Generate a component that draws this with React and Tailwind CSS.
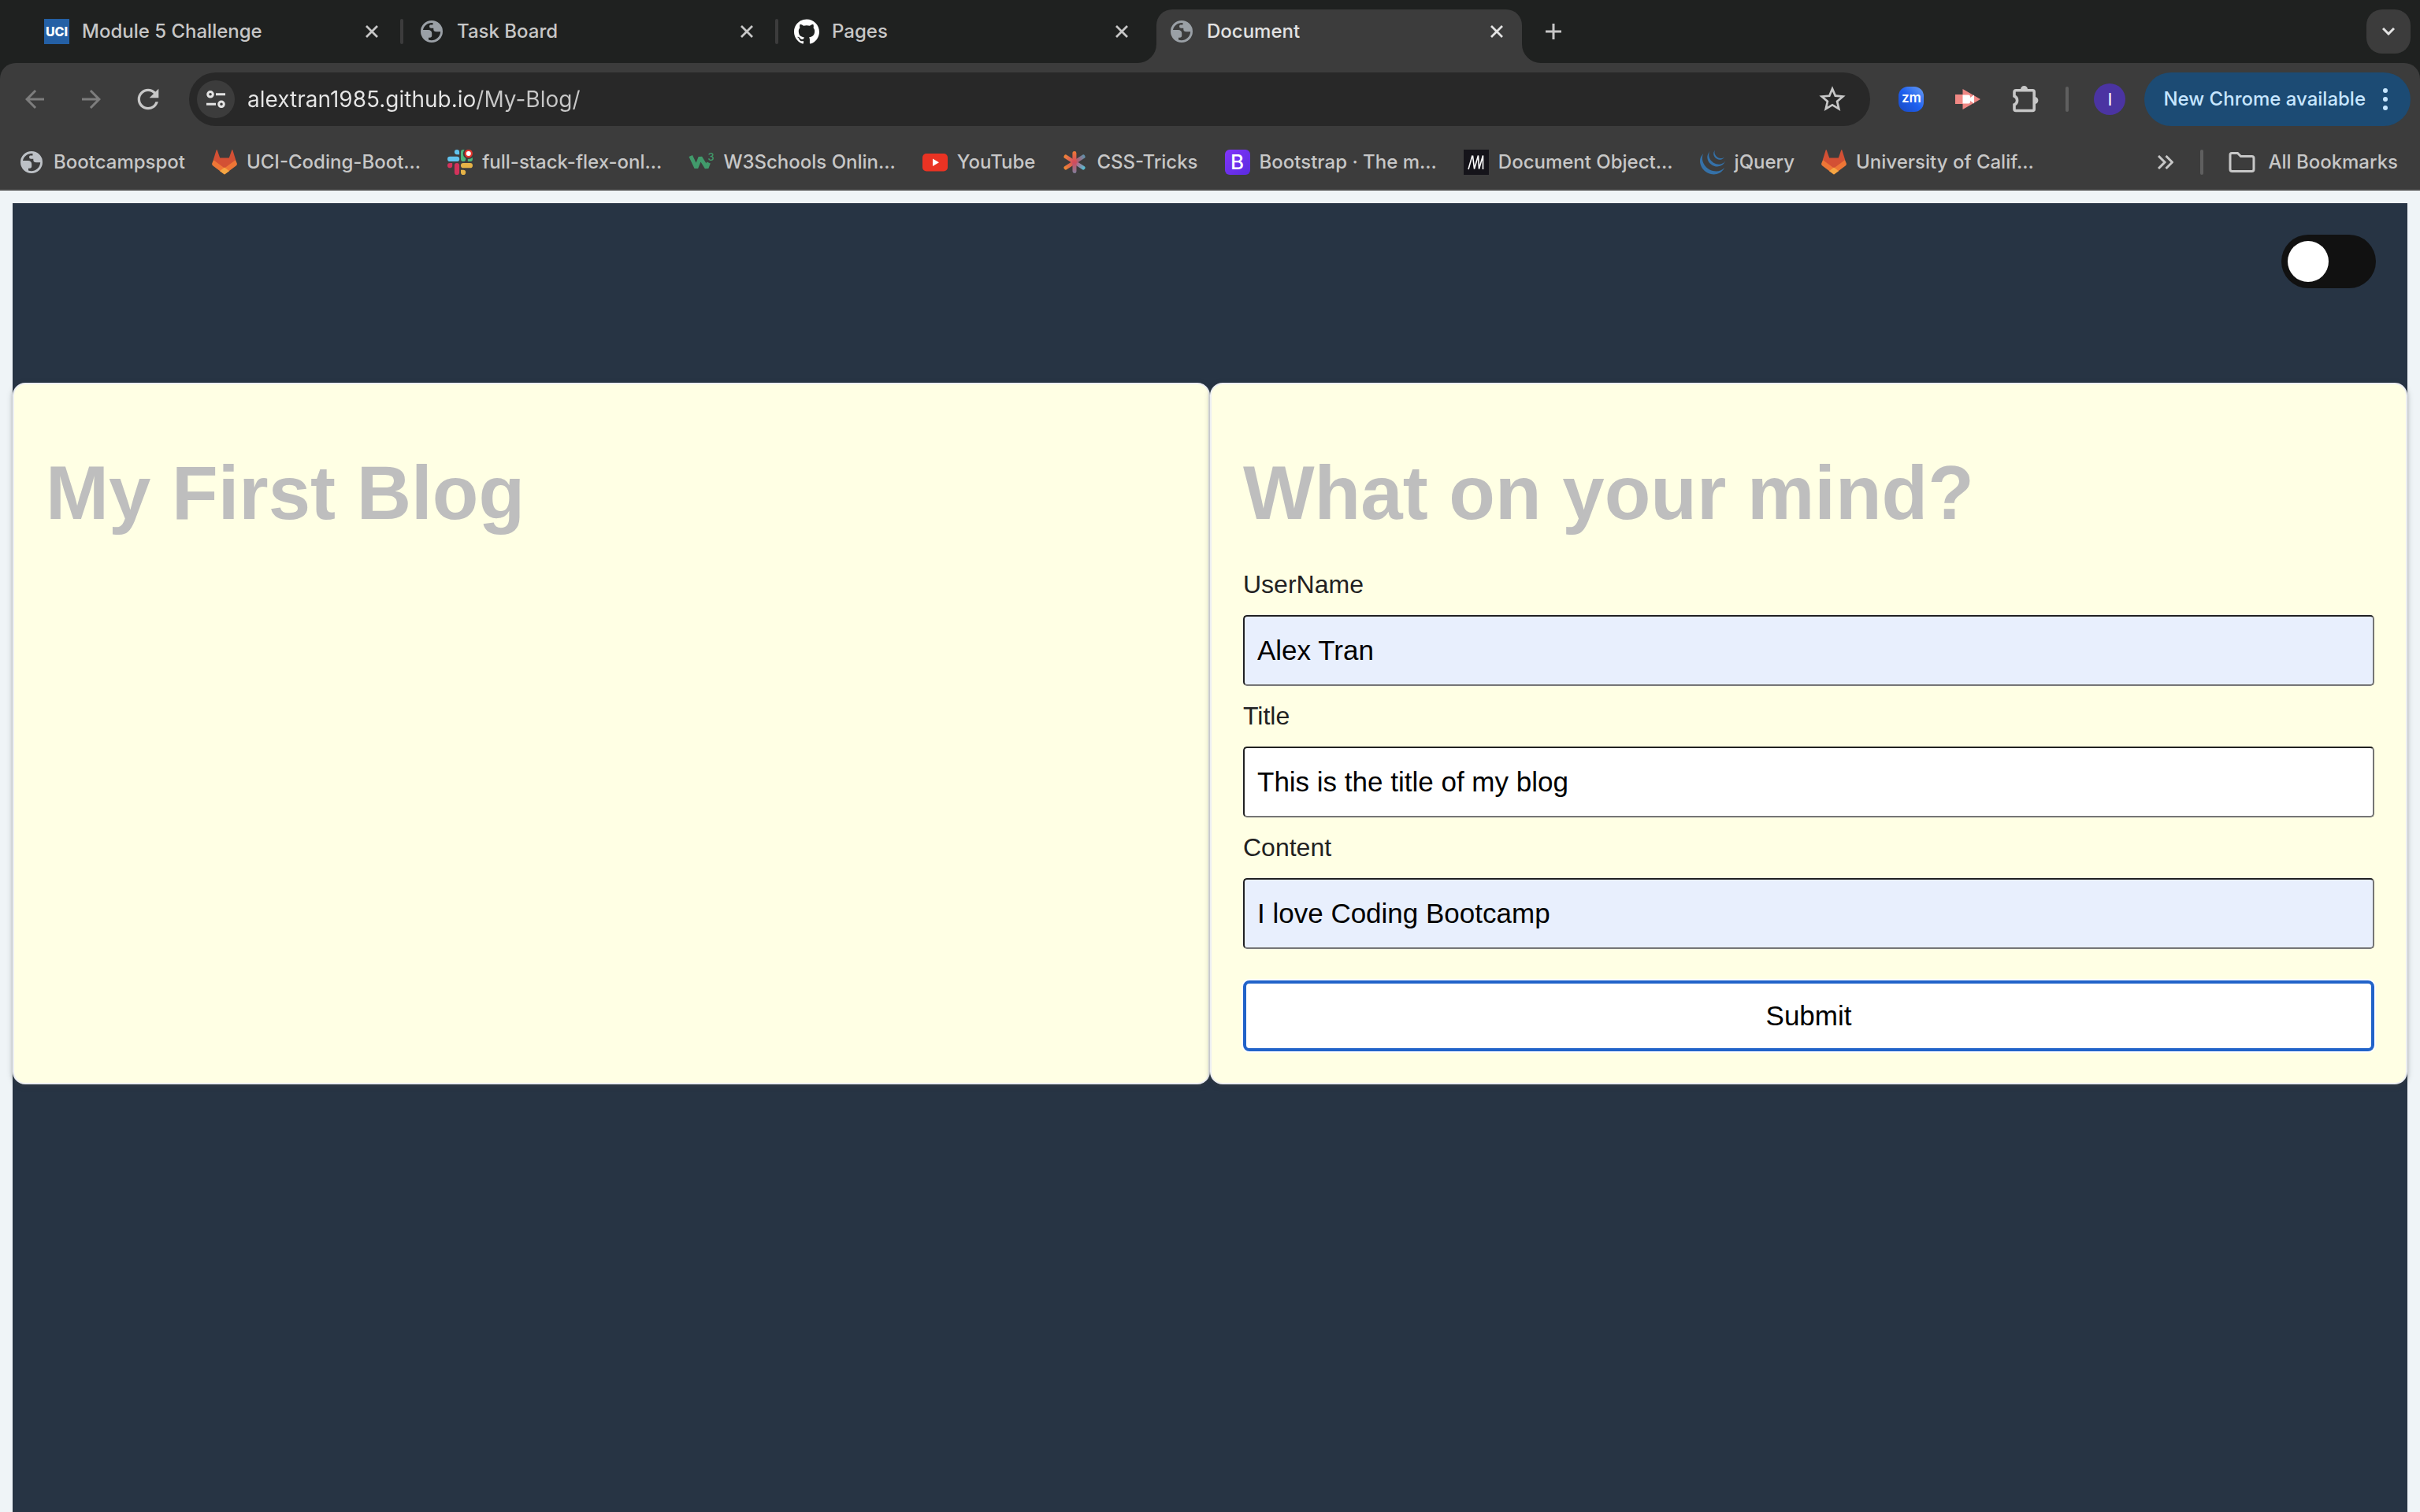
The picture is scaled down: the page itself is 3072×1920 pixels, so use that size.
import { useState } from "react";
import { MdArrowBack, MdArrowForward, MdRefresh, MdStarBorder } from "react-icons/md";
import { SiJquery, SiGithub } from "react-icons/si";

function Globe({ className }) {
  return (
    <svg viewBox="-2 -2 32 32" className={`size-8 shrink-0 ${className}`} fill="currentColor" aria-hidden="true">
      <path
        fillRule="evenodd"
        d="M14 0a14 14 0 1 0 0 28a14 14 0 1 0 0-28zM15.5 3C9 2.4 4 6.6 3 12h6.500c3 0 4.700 1.700 4.700 4.300v3c0 1.500-1 2.400-2.400 2.400H10v2.800c6.500 2.300 14.500-1.500 15.200-10.200h-5.400c-2.300 0-3.500-1.200-3.500-3V9.700h-3c-1.400 0-2.200-.7-2.200-2V7c0-1 .7-1.600 1.700-1.600h2.700z"
      />
    </svg>
  );
}

function UciIcon() {
  return (
    <span className="flex size-8 shrink-0 items-center justify-center bg-[#2460a5] text-[16px] leading-none font-extrabold text-white">
      UCI
    </span>
  );
}

function Tanuki() {
  return (
    <svg viewBox="0 0 32 32" className="size-8 shrink-0" aria-hidden="true">
      <path fill="#ee7636" d="M2 13L.2 17.600c-.3 1 0 2 .8 2.600L16 31.500L31 20.200c.8-.6 1.100-1.600.8-2.600L30 13z" />
      <path fill="#d35034" d="M5.600.8c.2-.6 1-.6 1.200 0L10.200 10.500h11.600L25.200.8c.2-.6 1-.6 1.200 0L30.200 13L16 23.500L1.800 13z" />
      <path fill="#f5a643" d="M16 22.500L22 27.200L16 31.500L10 27.200z" />
    </svg>
  );
}

function SlackIcon() {
  return (
    <svg viewBox="0 0 32 32" className="size-8 shrink-0" aria-hidden="true">
      <g fill="#61c3ee">
        <path d="M12 0a3.100 3.100 0 1 0 0 6.200h3.100V3.100A3.100 3.100 0 0 0 12 0z" />
        <rect y="8.800" width="15.200" height="6.200" rx="3.100" />
      </g>
      <g fill="#4db57c">
        <rect x="17" width="6.200" height="15" rx="3.100" />
        <path d="M25.800 15v-3.100a3.100 3.100 0 1 1 3.100 3.100z" />
      </g>
      <g fill="#d2335b">
        <path d="M0 20.200a3.100 3.100 0 1 0 6.200 0v-3.100H3.100A3.100 3.100 0 0 0 0 20.200z" />
        <rect x="8.900" y="17.100" width="6.200" height="14.900" rx="3.100" />
      </g>
      <g fill="#e6b347">
        <rect x="17" y="17.100" width="15" height="6.200" rx="3.100" />
        <path d="M17 25.800v3.100a3.100 3.100 0 1 0 3.100-3.100z" />
      </g>
      <circle cx="26.800" cy="5" r="7" fill="#3c3c3c" />
      <circle cx="26.800" cy="5" r="5.200" fill="#e3352b" />
      <circle cx="26.800" cy="5" r="3" fill="#fff" />
    </svg>
  );
}

function W3Icon() {
  return (
    <svg viewBox="0 0 32 32" className="size-8 shrink-0" aria-hidden="true">
      <path
        d="M2.800 8L9.800 23L15 10L23 23L25.500 16.500"
        fill="none"
        stroke="#419a6b"
        strokeWidth="5"
        strokeLinejoin="bevel"
      />
      <text x="24.500" y="14" fontSize="13" fontWeight="500" fill="#419a6b" fontFamily="Inter, sans-serif">3</text>
    </svg>
  );
}

function YouTubeIcon() {
  return (
    <svg viewBox="0 0 32 32" className="size-8 shrink-0" aria-hidden="true">
      <rect x="0" y="5" width="32" height="22.500" rx="5" fill="#ea3323" />
      <path d="M13 11.500L21 16.200L13 21z" fill="#fff" />
    </svg>
  );
}

function CssTricksIcon() {
  return (
    <svg viewBox="0 0 32 32" className="size-8 shrink-0" aria-hidden="true">
      <defs>
        <linearGradient id="ct-a" gradientUnits="userSpaceOnUse" x1="3" y1="8" x2="29" y2="24">
          <stop offset="0" stopColor="#ee8434" />
          <stop offset=".5" stopColor="#d24a6c" />
          <stop offset="1" stopColor="#4fc3d9" />
        </linearGradient>
        <linearGradient id="ct-b" gradientUnits="userSpaceOnUse" x1="3" y1="24" x2="29" y2="8">
          <stop offset="0" stopColor="#f08a32" />
          <stop offset=".5" stopColor="#d24a5c" />
          <stop offset="1" stopColor="#5d93ad" />
        </linearGradient>
        <linearGradient id="ct-c" gradientUnits="userSpaceOnUse" x1="16" y1="2" x2="16" y2="30">
          <stop offset="0" stopColor="#ee7a36" />
          <stop offset=".5" stopColor="#d24a5c" />
          <stop offset="1" stopColor="#7f7f9c" />
        </linearGradient>
      </defs>
      <g fill="none" strokeWidth="5" strokeLinecap="round">
        <path d="M5 9L27 23" stroke="url(#ct-a)" />
        <path d="M5 23L27 9" stroke="url(#ct-b)" />
        <path d="M15.900 4.500L16 27.500" stroke="url(#ct-c)" />
      </g>
    </svg>
  );
}

function BootstrapIcon() {
  return (
    <span className="flex size-8 shrink-0 items-center justify-center rounded-md bg-linear-to-br from-[#8134f9] to-[#5a2be0] text-[26px] leading-none font-medium text-white">
      B
    </span>
  );
}

function MdnIcon() {
  return (
    <svg viewBox="0 0 32 32" className="size-8 shrink-0" aria-hidden="true">
      <rect width="32" height="32" fill="#15141a" />
      <path d="M6 25L11 7.500M11.500 7.500L13.500 24.500L18.500 7.500L19.500 24.500L24.500 7.500V25" fill="none" stroke="#fff" strokeWidth="1.600" strokeLinejoin="bevel" />
    </svg>
  );
}

const TABS = [
  { title: "Module 5 Challenge", icon: <UciIcon /> },
  { title: "Task Board", icon: <Globe className="text-[#9aa0a6]" /> },
  { title: "Pages", icon: <SiGithub className="size-8 shrink-0 text-white" /> },
  { title: "Document", icon: <Globe className="text-[#9aa0a6]" />, active: true },
];

const BOOKMARKS = [
  ["Bootcampspot", <Globe className="text-[#bdc1c6]" />],
  ["UCI-Coding-Boot...", <Tanuki />],
  ["full-stack-flex-onl...", <SlackIcon />],
  ["W3Schools Onlin...", <W3Icon />],
  ["YouTube", <YouTubeIcon />],
  ["CSS-Tricks", <CssTricksIcon />],
  ["Bootstrap · The m...", <BootstrapIcon />],
  ["Document Object...", <MdnIcon />],
  ["jQuery", <SiJquery className="size-8 shrink-0 text-[#3571a8]" />],
  ["University of Calif...", <Tanuki />],
];

function Foot({ className }) {
  return (
    <svg viewBox="0 0 24 24" className={`absolute bottom-0 size-6 text-[#3c3c3c] ${className}`} fill="currentColor" aria-hidden="true">
      <path d="M24 0V24H0A24 24 0 0 0 24 0z" />
    </svg>
  );
}

function Tab({ title, icon, active }) {
  return (
    <div
      className={`relative flex w-[464px] items-center gap-4 px-4 pb-3 ${
        active ? "rounded-t-[20px] bg-[#3c3c3c] text-[#e3e3e3]" : "text-[#c7c7c7]"
      }`}
    >
      {active && <Foot className="-left-6" />}
      {active && <Foot className="-right-6 -scale-x-100" />}
      {icon}
      <span className="flex-1 truncate">{title}</span>
      <button type="button" aria-label={`Close ${title}`} className="flex size-8 items-center justify-center">
        <svg viewBox="0 0 16 16" className="size-4" fill="none" stroke="currentColor" strokeWidth="2.800" aria-hidden="true">
          <path d="M1 1L15 15M15 1L1 15" />
        </svg>
      </button>
    </div>
  );
}

function TabStrip() {
  return (
    <div className="flex h-20 bg-[#1f2120] pt-3 pr-3 pl-10">
      {TABS.map((tab, i) => (
        <div key={tab.title} className="flex">
          {i > 0 && (
            <span className="flex w-3 items-center justify-center pb-3">
              {!tab.active && <span className="h-8 w-1 rounded-full bg-[#3c3c3c]" />}
            </span>
          )}
          <Tab {...tab} />
        </div>
      ))}
      <button type="button" aria-label="New tab" className="ml-5 flex h-14 w-10 items-center justify-center text-[#c7c7c7]">
        <svg viewBox="0 0 20 20" className="size-5" stroke="currentColor" strokeWidth="3" aria-hidden="true">
          <path d="M10 0V20M0 10H20" />
        </svg>
      </button>
      <button
        type="button"
        aria-label="Search tabs"
        className="ml-auto flex size-14 items-center justify-center rounded-[20px] bg-[#3c3c3c] text-[#e3e3e3]"
      >
        <svg viewBox="0 0 16 10" className="h-[10px] w-4" fill="none" stroke="currentColor" strokeWidth="3" aria-hidden="true">
          <path d="M1 1L8 8L15 1" />
        </svg>
      </button>
    </div>
  );
}

function Omnibox() {
  return (
    <div className="ml-8 flex h-17 flex-1 items-center rounded-full bg-[#282828] pr-7 pl-[10px]">
      <button
        type="button"
        aria-label="View site information"
        className="flex size-12 items-center justify-center rounded-full bg-[#3c3c3c] text-[#e3e3e3]"
      >
        <svg viewBox="0 0 24 22" className="h-[22px] w-6" fill="none" stroke="currentColor" strokeWidth="3" aria-hidden="true">
          <circle cx="5" cy="4.800" r="3.300" />
          <circle cx="19" cy="17.300" r="3.300" />
          <path d="M12 4.800H24M0 17.300H12" />
        </svg>
      </button>
      <input
        type="text"
        aria-label="Address"
        defaultValue="alextran1985.github.io/My-Blog/"
        className="ml-4 min-w-0 flex-1 bg-[linear-gradient(90deg,#e6e6e6_292px,#c7c7c7_292px)] bg-clip-text text-[28px] font-normal text-transparent outline-none"
      />
      <button type="button" aria-label="Bookmark this page" className="flex size-10 items-center justify-center text-[#c7c7c7]">
        <MdStarBorder className="size-10" />
      </button>
    </div>
  );
}

function Toolbar() {
  return (
    <div className="bg-[#1f2120]">
      <div className="flex items-center rounded-t-[20px] bg-[#3c3c3c] py-3 pr-3 pl-6 text-[#c7c7c7]">
        <div className="flex gap-8">
          <button type="button" aria-label="Back" className="flex size-10 items-center justify-center text-[#7d7d7d]">
            <MdArrowBack className="size-9" />
          </button>
          <button type="button" aria-label="Forward" className="flex size-10 items-center justify-center text-[#7d7d7d]">
            <MdArrowForward className="size-9" />
          </button>
          <button type="button" aria-label="Reload" className="flex size-10 items-center justify-center">
            <MdRefresh className="size-10" />
          </button>
        </div>
        <Omnibox />
        <div className="ml-8 flex items-center gap-8">
          <button type="button" aria-label="Zoom" className="flex size-10 items-center justify-center">
            <span className="flex size-8 items-center justify-center rounded-[12px] bg-linear-to-tr from-[#1a49c0] via-[#1e60f0] to-[#6a9cf2] pb-[3px] text-[17px] leading-none font-semibold text-white">
              zm
            </span>
          </button>
          <button type="button" aria-label="Screen recorder" className="flex size-10 items-center justify-center">
            <svg viewBox="0 0 32 26" className="h-[26px] w-8" aria-hidden="true">
              <path fill="#f08884" d="M0 7H9.500V0L32 13L9.500 26V19H0z" />
              <path fill="#fff" d="M9.500 7.500H17q2 0 2 2V11L24 7.500V18.500L19 15V16.500q0 2-2 2H9.500z" />
            </svg>
          </button>
          <button type="button" aria-label="Extensions" className="flex size-10 items-center justify-center">
            <svg viewBox="-4 0 38 34" className="h-[34px] w-[38px]" aria-hidden="true">
              <path d="M10 4.500a4.500 4.500 0 0 1 9 0zM29 14a4.700 4.700 0 0 1 0 9z" fill="currentColor" />
              <path
                d="M4 5.800H25.200q2 0 2 2V29.500q0 2-2 2H4q-2 0-2-2V24a6 6 0 0 0 0-11V7.800q0-2 2-2z"
                fill="none"
                stroke="currentColor"
                strokeWidth="3.600"
              />
            </svg>
          </button>
          <span className="h-8 w-1 rounded-full bg-[#5f5f5f]" />
          <button
            type="button"
            aria-label="Profile"
            className="flex size-10 items-center justify-center rounded-full bg-[#4b34a2] text-[22px] leading-none font-normal text-white"
          >
            I
          </button>
        </div>
        <button type="button" className="ml-6 flex h-17 items-center gap-[22px] rounded-full bg-[#1c4b74] pr-[29px] pl-6 text-[#c7e6ff]">
          New Chrome available
          <svg viewBox="0 0 6 28" className="h-7 w-[6px]" fill="currentColor" aria-hidden="true">
            <circle cx="3" cy="3" r="3" />
            <circle cx="3" cy="14" r="3" />
            <circle cx="3" cy="25" r="3" />
          </svg>
        </button>
      </div>
    </div>
  );
}

function BookmarksBar() {
  return (
    <nav aria-label="Bookmarks" className="flex h-[70px] items-center border-b-2 border-[#4a4a4a] bg-[#3c3c3c] pr-7 pl-6 text-[#c7c7c7]">
      <div className="flex gap-[34px]">
        {BOOKMARKS.map(([label, icon]) => (
          <a key={label} href="#" className="flex items-center gap-3 whitespace-nowrap">
            {icon}
            {label}
          </a>
        ))}
      </div>
      <button type="button" aria-label="More bookmarks" className="ml-auto flex h-8 w-5 items-center">
        <svg viewBox="0 0 20 18" className="h-[18px] w-5" fill="none" stroke="currentColor" strokeWidth="3" aria-hidden="true">
          <path d="M1 1L9 9L1 17M10.500 1L18.500 9L10.500 17" />
        </svg>
      </button>
      <span className="mr-8 ml-[34px] h-8 w-1 rounded-full bg-[#5f5f5f]" />
      <a href="#" className="flex items-center gap-4 whitespace-nowrap">
        <svg viewBox="0 0 34 26" className="h-[26px] w-[34px]" fill="none" stroke="currentColor" strokeWidth="3" aria-hidden="true">
          <path d="M4 1.500H11.500L15.500 5.500H29.500q2.500 0 2.500 2.500V22q0 2.500-2.500 2.500H4.500q-2.500 0-2.500-2.500V3.500q0-2 2-2z" />
        </svg>
        All Bookmarks
      </a>
    </nav>
  );
}

const CARD =
  "rounded-2xl border-2 border-[#edeff2] bg-[#ffffe4] p-10 shadow-[0_2px_4px_0_rgba(60,64,67,0.3),0_2px_6px_2px_rgba(60,64,67,0.15)]";
const HEADING = "my-[43px] text-[96px] leading-[110px] font-bold text-[#bebebe]";

function Field({ id, label, defaultValue, filled }) {
  return (
    <>
      <label htmlFor={id} className="block text-[32px] leading-[37px] text-[#212121]">
        {label}
      </label>
      <input
        id={id}
        type="text"
        defaultValue={defaultValue}
        className={`my-5 block h-[90px] w-full rounded-[5px] border-2 border-t-[#212121] border-r-[#757575] border-b-[#757575] border-l-[#212121] px-4 text-[35px] text-black outline-none ${
          filled ? "bg-[#e8effd]" : "bg-white"
        }`}
      />
    </>
  );
}

export default function App() {
  const [on, setOn] = useState(false);
  return (
    <div className="flex min-h-screen flex-col bg-[#eff4f7]">
      <header className="font-['Inter',sans-serif] text-[24px] leading-8 font-medium">
        <TabStrip />
        <Toolbar />
        <BookmarksBar />
      </header>
      <main className="mx-4 mt-4 flex-1 bg-[#273444] font-['Liberation_Sans',Arial,sans-serif]">
        <div className="flex justify-end px-10 pt-10 pb-[120px]">
          <input
            type="checkbox"
            role="switch"
            aria-label="Dark mode"
            checked={on}
            onChange={(e) => setOn(e.target.checked)}
            className="block h-[68px] w-[120px] appearance-none rounded-full bg-[#111] p-2 before:block before:size-[52px] before:rounded-full before:bg-white checked:before:ml-auto"
          />
        </div>
        <div className="grid grid-cols-2">
          <section className={CARD}>
            <h1 className={HEADING}>My First Blog</h1>
          </section>
          <section className={CARD}>
            <h1 className={HEADING}>What on your mind?</h1>
            <form onSubmit={(e) => e.preventDefault()}>
              <Field id="username" label="UserName" defaultValue="Alex Tran" filled />
              <Field id="title" label="Title" defaultValue="This is the title of my blog" />
              <Field id="content" label="Content" defaultValue="I love Coding Bootcamp" filled />
              <button
                type="submit"
                className="mt-10 block h-[90px] w-full rounded-lg border-4 border-[#2163c9] bg-white text-[35px] text-black ring-2 ring-white"
              >
                Submit
              </button>
            </form>
          </section>
        </div>
      </main>
    </div>
  );
}
